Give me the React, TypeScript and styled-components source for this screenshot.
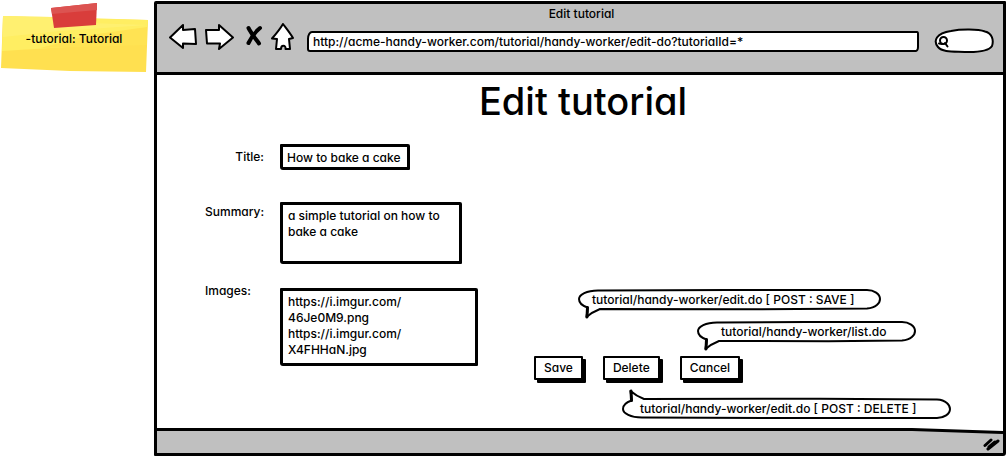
import React, { useId } from "react";
import styled, { createGlobalStyle, css } from "styled-components";

const GlobalStyle = createGlobalStyle`
  *, *::before, *::after { box-sizing: border-box; }
  body { margin: 0; background: #fff; }
  body, input, textarea, button {
    font: 500 12px/16px Inter, "Noto Sans", sans-serif;
    font-feature-settings: "cv11" 1;
    color: #000;
  }
`;

const Page = styled.div`
  display: flex;
  gap: 6px;
  min-height: 100vh;
  padding: 1px 1px 1px 0;
`;

const Note = styled.aside`
  position: relative;
  flex: 0 0 148px;
  height: 74px;
  padding-top: 30px;
  text-align: center;
`;

const NotePaper = styled.svg`
  position: absolute;
  inset: 0;
`;

const NoteText = styled.p`
  position: relative;
  margin: 0;
`;

const Browser = styled.main`
  flex: 1;
  min-width: 0;
  display: flex;
  flex-direction: column;
  border: 3px solid #000;
  border-radius: 2px 1px 3px 1px;
`;

const Chrome = styled.header`
  background: #c0c0c0;
  border-bottom: 3px solid #000;
  padding: 2px 9px 19px 12px;
`;

const WindowTitle = styled.div`
  text-align: center;
  padding-bottom: 1px;
`;

const Toolbar = styled.div`
  display: flex;
  align-items: flex-start;
`;

const Nav = styled.nav`
  display: flex;
  flex: none;
  margin-right: 13px;
`;

const IconButton = styled.button<{ $gap?: number }>`
  display: block;
  padding: 0;
  border: 0;
  background: none;
  height: 28px;
  margin-right: ${(p) => p.$gap ?? 0}px;
  svg { display: block; }
`;

const Address = styled.input`
  flex: 1;
  min-width: 0;
  height: 21px;
  margin: 8px 15px 0 0;
  padding: 0 4px;
  background: #fff;
  border: 2px solid #000;
  border-radius: 5px 2px 3px 3px / 8px 3px 5px 3px;
  outline: none;
`;

const SearchBox = styled.label`
  position: relative;
  flex: 0 0 60px;
  height: 25px;
  margin-top: 5px;
`;

const SearchShape = styled.svg`
  position: absolute;
  inset: 0;
`;

const SearchInput = styled.input`
  position: relative;
  width: 38px;
  height: 16px;
  margin: 4px 0 0 17px;
  padding: 0;
  border: 0;
  background: none;
  outline: none;
`;

const Canvas = styled.section`
  flex: 1;
  padding: 4px 20px 0 48px;
`;

const Heading = styled.h1`
  margin: 0 0 21px;
  padding-right: 22px;
  text-align: center;
  font-weight: 500;
  font-size: 38px;
  line-height: 44px;
`;

const Columns = styled.form`
  display: flex;
  gap: 56px;
`;

const Fields = styled.div`
  display: flex;
  flex-direction: column;
  gap: 18px;
`;

const FieldRow = styled.div`
  display: grid;
  grid-template-columns: 59px 198px;
  column-gap: 16px;
  align-items: start;
  min-height: 40px;
`;

const FieldLabel = styled.label<{ $top?: number; $align?: string }>`
  padding-top: ${(p) => p.$top ?? 0}px;
  text-align: ${(p) => p.$align ?? "left"};
  white-space: nowrap;
`;

const sketchBox = css`
  display: block;
  background: #fff;
  border: 3px solid #000;
  border-radius: 1px 2px 1px 3px;
  outline: none;
`;

const TextField = styled.input`
  ${sketchBox}
  width: 130px;
  height: 26px;
  padding: 0 4px;
`;

const TextArea = styled.textarea<{ $width: number; $height: number; $top?: number }>`
  ${sketchBox}
  width: ${(p) => p.$width}px;
  height: ${(p) => p.$height}px;
  margin: ${(p) => p.$top ?? 0}px 0 0;
  padding: 3px 5px;
  resize: none;
  overflow: hidden;
`;

const Side = styled.div`
  flex: 1;
  min-width: 0;
  padding-top: 145px;
`;

const Actions = styled.div`
  display: flex;
  gap: 20px;
  margin: 15px 0 18px;
`;

const ActionButton = styled.button`
  height: 24px;
  padding: 0 8px;
  background: #fff;
  border: 2px solid #000;
  border-radius: 1px;
  box-shadow: 3px 3px 0 #000;
`;

const BubbleBox = styled.div<{ $width: number; $indent: number; $inset: number }>`
  position: relative;
  width: ${(p) => p.$width}px;
  height: 20px;
  margin: 0 0 12px ${(p) => p.$indent}px;
  padding: 3px 0 1px ${(p) => p.$inset}px;
  white-space: nowrap;
`;

const BubbleShape = styled.svg<{ $up?: boolean }>`
  position: absolute;
  left: 0;
  top: ${(p) => (p.$up ? -9 : 0)}px;
  transform: ${(p) => (p.$up ? "scaleY(-1)" : "none")};
`;

const BubbleText = styled.span`
  position: relative;
`;

const StatusBar = styled.footer`
  position: relative;
  display: flex;
  justify-content: flex-end;
  height: 22px;
  padding: 5px 3px 0 0;
  background: #c0c0c0;
`;

const StatusRule = styled.svg`
  position: absolute;
  left: 0;
  top: -3px;
  width: 100%;
  height: 7px;
`;

interface BubbleProps {
  width: number;
  indent: number;
  inset: number;
  up?: boolean;
  children: string;
}

function Bubble({ width: w, indent, inset, up, children }: BubbleProps) {
  return (
    <BubbleBox $width={w} $indent={indent} $inset={inset}>
      <BubbleShape $up={up} width={w} height={30} aria-hidden="true">
        <path
          d={`M22 1.500 C8 1 1 6 1 10 C1 15 5 17 9.500 18.500 C9.500 22 9 25 8.500 28 C13 24 17 22 22 20 L${w * 0.6} 20.300 L${w - 14} 19.500 C${w - 5} 19 ${w - 1} 14 ${w - 1} 10 C${w - 1} 5 ${w - 7} 1 ${w - 14} 1 L${w * 0.5} 1 Z`}
          fill="#fff"
          stroke="#000"
          strokeWidth="2"
          strokeLinejoin="round"
        />
        <path d="M9.500 18.500 L9 28" stroke="#000" strokeWidth="3" strokeLinecap="round" />
      </BubbleShape>
      <BubbleText>{children}</BubbleText>
    </BubbleBox>
  );
}

const stroke = {
  fill: "#fff",
  stroke: "#000",
  strokeWidth: 2,
  strokeLinejoin: "round" as const,
};

export default function App() {
  const id = useId();
  return (
    <>
      <GlobalStyle />
      <Page>
        <Note>
          <NotePaper width="148" height="74" aria-hidden="true">
            <path d="M3 15 L54 17 L148 19 L146 71 L70 70 L1 67 Z" fill="#ffe050" />
            <path d="M3 15 L54 16 L148 19 L147 30 L100 44 L2 50 Z" fill="#ffee62" />
            <path d="M3 15 L50 16 L90 22 L147 24 L60 30 L3 36 Z" fill="#fff27a" opacity=".6" />
            <path d="M90 34 L147 26 L147 44 L40 47 Z" fill="#ffe353" />
            <path d="M51 7 L97 2 L96 24 L54 27 Z" fill="#d93d3b" />
            <path d="M51 7 L97 2 L97 9 L52 13 Z" fill="#dc5351" />
          </NotePaper>
          <NoteText>-tutorial: Tutorial</NoteText>
        </Note>

        <Browser>
          <Chrome>
            <WindowTitle>Edit tutorial</WindowTitle>
            <Toolbar>
              <Nav aria-label="Browser">
                <IconButton type="button" aria-label="Back" $gap={8}>
                  <svg width="28" height="28">
                    <path {...stroke} d="M1 14.500 L14 2 L14 7 L26 6 L27 21 L14 20.500 L14 25 Z" />
                  </svg>
                </IconButton>
                <IconButton type="button" aria-label="Forward" $gap={11}>
                  <svg width="29" height="28">
                    <path {...stroke} d="M1 7 L14 7 L14 2 L28 14.500 L14 26 L15 20.500 L2 20.500 Z" />
                  </svg>
                </IconButton>
                <IconButton type="button" aria-label="Stop" $gap={8}>
                  <svg width="18" height="28" fill="none" stroke="#000" strokeLinecap="round">
                    <path d="M3.500 5 C6 10 10 15 14 20.500" strokeWidth="4" />
                    <path d="M15 5 C10 9 6 15 3.500 20" strokeWidth="4" />
                  </svg>
                </IconButton>
                <IconButton type="button" aria-label="Home">
                  <svg width="23" height="28">
                    <path {...stroke} d="M12 1 C15 5 19 10 22 15 L18 16 L19 26 L14.500 26 C15 21.500 10 21.500 10 26 L5 26 L6 16 L1 15.500 C5 11 9 6 12 1 Z" />
                  </svg>
                </IconButton>
              </Nav>
              <Address
                aria-label="Address"
                defaultValue="http://acme-handy-worker.com/tutorial/handy-worker/edit-do?tutorialId=*"
              />
              <SearchBox>
                <SearchShape width="60" height="25" aria-hidden="true">
                  <path {...stroke} d="M17 3 C27 1 44 1 51 3.500 C58 5 60 12 58 18 C55 23 45 24 35 24 C22 23 9 25 4 19 C-1 13 2 5 17 3 Z" />
                  <ellipse cx="9.500" cy="12.500" rx="3.500" ry="3.500" fill="none" stroke="#000" strokeWidth="2" />
                  <path d="M5 15.500 L8 16 M11 15 L13.500 18.500" stroke="#000" strokeWidth="2" strokeLinecap="round" />
                </SearchShape>
                <SearchInput type="text" aria-label="Search" />
              </SearchBox>
            </Toolbar>
          </Chrome>

          <Canvas>
            <Heading>Edit tutorial</Heading>
            <Columns onSubmit={(e) => e.preventDefault()}>
              <Fields>
                <FieldRow>
                  <FieldLabel htmlFor={id + "t"} $top={5} $align="right">Title:</FieldLabel>
                  <TextField id={id + "t"} defaultValue="How to bake a cake" />
                </FieldRow>
                <FieldRow>
                  <FieldLabel htmlFor={id + "s"} $top={2} $align="right">Summary:</FieldLabel>
                  <TextArea
                    id={id + "s"}
                    $width={182}
                    $height={62}
                    defaultValue={"a simple tutorial on how to\nbake a cake"}
                  />
                </FieldRow>
                <FieldRow>
                  <FieldLabel htmlFor={id + "i"} $top={1}>Images:</FieldLabel>
                  <TextArea
                    id={id + "i"}
                    $width={198}
                    $height={78}
                    $top={6}
                    defaultValue={"https://i.imgur.com/\n46Je0M9.png\nhttps://i.imgur.com/\nX4FHHaN.jpg"}
                  />
                </FieldRow>
              </Fields>

              <Side>
                <Bubble width={303} indent={44} inset={14}>
                  tutorial/handy-worker/edit.do [ POST : SAVE ]
                </Bubble>
                <Bubble width={219} indent={163} inset={24}>
                  tutorial/handy-worker/list.do
                </Bubble>
                <Actions>
                  <ActionButton type="submit">Save</ActionButton>
                  <ActionButton type="button">Delete</ActionButton>
                  <ActionButton type="button">Cancel</ActionButton>
                </Actions>
                <Bubble up width={329} indent={88} inset={18}>
                  tutorial/handy-worker/edit.do [ POST : DELETE ]
                </Bubble>
              </Side>
            </Columns>
          </Canvas>

          <StatusBar>
            <StatusRule viewBox="0 0 846 7" preserveAspectRatio="none" aria-hidden="true">
              <path d="M0 0 H846 V4 L755 1 L0 1 Z" fill="#fff" />
              <path d="M0 1.500 L755 1.500 L846 4.500" fill="none" stroke="#000" strokeWidth="3" />
            </StatusRule>
            <svg width="17" height="16" fill="none" stroke="#000" strokeLinecap="round" aria-hidden="true">
              <path d="M2 9.500 L8 4" strokeWidth="3" />
              <path d="M5 13 L15 5 M6 11 L12 6" strokeWidth="3" />
            </svg>
          </StatusBar>
        </Browser>
      </Page>
    </>
  );
}
